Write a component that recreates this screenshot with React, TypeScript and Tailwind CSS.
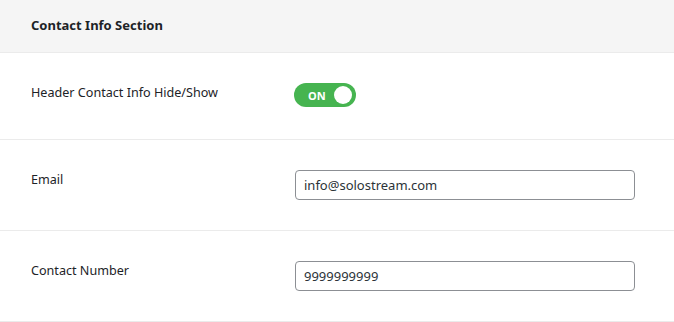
import React from 'react';

const font = { fontFamily: '"Noto Sans", "Open Sans", sans-serif' };

const Toggle = () => (
  <div className="flex h-[24px] w-[62px] items-center justify-between rounded-full bg-[#46b450] pl-[14px] pr-[4px]">
    <span className="text-[11px] font-bold leading-none text-white">ON</span>
    <span className="h-[18px] w-[18px] rounded-full bg-white" />
  </div>
);

const Row = ({ label, pb, children }: { label: string; pb: string; children: React.ReactNode }) => (
  <div className={`flex items-start border-b border-[#ebebeb] pt-[30px] pl-[31px] ${pb}`}>
    <div className="w-[263px] text-[12.6px] leading-[20px] text-[#1d2327]">{label}</div>
    <div>{children}</div>
  </div>
);

export default function App() {
  return (
    <div className="min-h-[322px] w-[674px] bg-white" style={font}>
      <div className="flex h-[53px] items-center border-b border-[#ebebeb] bg-[#f5f5f5] pl-[31px]">
        <h2 className="text-[13px] font-bold text-[#1d2327]">Contact Info Section</h2>
      </div>
      <Row label="Header Contact Info Hide/Show" pb="pb-[32px]">
        <Toggle />
      </Row>
      <Row label="Email" pb="pb-[30px]">
        <input
          readOnly
          value="info@solostream.com"
          className="ml-px h-[30px] w-[340px] rounded-[4px] border border-[#8c8f94] px-[8px] text-[13px] text-[#2c3338] outline-none"
          style={font}
        />
      </Row>
      <Row label="Contact Number" pb="pb-[30px]">
        <input
          readOnly
          value="9999999999"
          className="ml-px h-[30px] w-[340px] rounded-[4px] border border-[#8c8f94] px-[8px] text-[13px] text-[#2c3338] outline-none"
          style={font}
        />
      </Row>
    </div>
  );
}
